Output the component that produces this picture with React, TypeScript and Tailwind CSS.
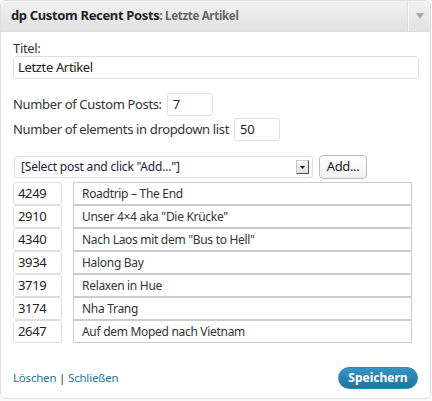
const posts = [
  { id: "4249", title: "Roadtrip – The End" },
  { id: "2910", title: "Unser 4×4 aka \"Die Krücke\"" },
  { id: "4340", title: "Nach Laos mit dem \"Bus to Hell\"" },
  { id: "3934", title: "Halong Bay" },
  { id: "3719", title: "Relaxen in Hue" },
  { id: "3174", title: "Nha Trang" },
  { id: "2647", title: "Auf dem Moped nach Vietnam" },
];

const font = { fontFamily: '"Lucida Grande", "Noto Sans", "DejaVu Sans", sans-serif' };

export default function App() {
  return (
    <div className="h-[401px] w-[432px] bg-[#f9f9f9] text-[13px] tracking-[-0.35px] text-[#333]" style={font}>
      <div className="w-[431px] overflow-hidden rounded-[6px] border border-[#dfdfdf] bg-white">
        {/* header */}
        <div className="flex h-[31px] items-stretch border-b border-[#dfdfdf] bg-gradient-to-b from-[#f2f2f2] to-[#e2e2e2]">
          <div className="flex flex-1 items-center pl-[10px]">
            <span className="text-[13px] font-bold text-[#222]">dp Custom Recent Posts</span>
            <span className="text-[11.5px] font-bold tracking-[-0.3px] text-[#666]">: Letzte Artikel</span>
          </div>
          <div className="flex w-[22px] items-center justify-center border-l border-l-[#f8f8f8] shadow-[-1px_0_0_#dcdcdc]">
            <svg width="8" height="6" viewBox="0 0 8 6">
              <path d="M0 0h8L4 6z" fill="#a8a8a8" />
            </svg>
          </div>
        </div>

        {/* body */}
        <div className="pl-[12px] pr-[12px] pt-[8px]">
          <div className="h-[16px] leading-[16px]">Titel:</div>
          <div className="flex h-[23px] w-[406px] items-center rounded-[3px] border border-[#dfdfdf] pl-[4px] text-[#222]">
            Letzte Artikel
          </div>

          <div className="mt-[14px] flex h-[23px] items-center">
            <span>Number of Custom Posts:</span>
            <div className="ml-[5px] flex h-[23px] w-[46px] items-center rounded-[3px] border border-[#dfdfdf] pl-[5px] text-[#222]">
              7
            </div>
          </div>
          <div className="mt-[2px] flex h-[23px] items-center">
            <span>Number of elements in dropdown list</span>
            <div className="ml-[5px] flex h-[23px] w-[46px] items-center rounded-[3px] border border-[#dfdfdf] pl-[5px] text-[#222]">
              50
            </div>
          </div>

          <div className="mt-[14px] flex h-[24px] items-center">
            <div className="ml-px flex h-[22px] w-[299px] items-center justify-between rounded-[3px] border border-[#dfdfdf] pl-[6px] pr-[3px] text-[12px] tracking-[-0.2px] text-[#1c1c3a]">
              <span>[Select post and click "Add..."]</span>
              <div className="flex h-[14px] w-[13px] items-center justify-center border border-[#c8c8c8] border-b-[#555] border-r-[#555] bg-gradient-to-b from-white to-[#dcdcdc]">
                <svg width="5" height="3" viewBox="0 0 5 3">
                  <path d="M0 0h5L2.5 3z" fill="#111" />
                </svg>
              </div>
            </div>
            <div className="ml-[6px] flex h-[24px] w-[48px] items-center justify-center rounded-[4px] border border-[#bbb] bg-gradient-to-b from-white to-[#f2f2f2] text-[#222]">
              Add...
            </div>
          </div>

          <div className="mt-[3px] flex flex-col">
            {posts.map((post) => (
              <div key={post.id} className="flex h-[23px] items-center">
                <div className="flex h-[23px] w-[49px] items-center rounded-[3px] border border-[#dfdfdf] pl-[4px] text-[#222]">
                  {post.id}
                </div>
                <div className="ml-[11px] flex h-[23px] w-[339px] items-center border border-[#ccc] pl-[8px] text-[12px] tracking-[-0.3px] text-[#333]">
                  {post.title}
                </div>
              </div>
            ))}
          </div>

          {/* footer */}
          <div className="mt-[24px] flex items-center justify-between pb-[9px]">
            <div className="text-[11.5px] tracking-[-0.2px] text-[#21759b]">
              <span>Löschen</span>
              <span className="text-[#333]"> | </span>
              <span>Schließen</span>
            </div>
            <div className="flex h-[22px] w-[80px] items-center justify-center rounded-full border border-[#298cba] bg-gradient-to-b from-[#3793c5] to-[#21759b] text-[12px] font-bold tracking-normal text-white">
              Speichern
            </div>
          </div>
        </div>
      </div>
    </div>
  );
}
